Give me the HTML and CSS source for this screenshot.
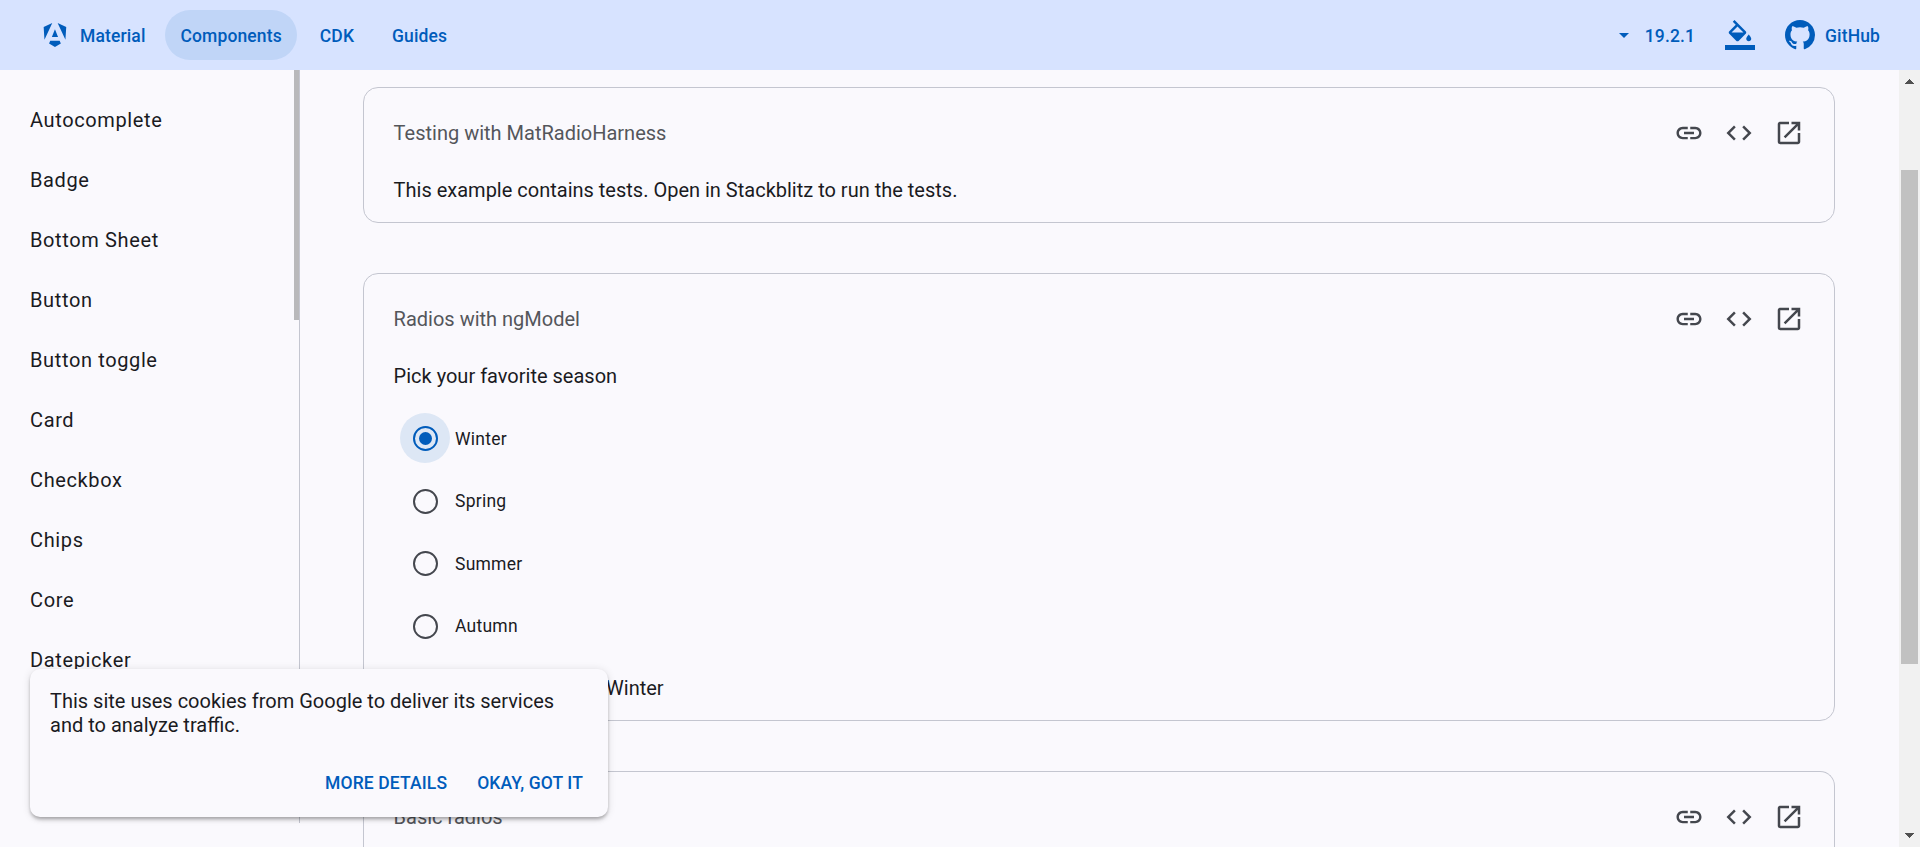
FILE: index.html
```
<!DOCTYPE html>
<html lang="en">
<head>
<meta charset="utf-8">
<title>Radio button | Angular Material</title>
<link rel="stylesheet" href="styles.css">
</head>
<body>
<svg class="sprite" width="0" height="0">
  <symbol id="link" viewBox="0 0 24 24"><path d="M3.9 12c0-1.71 1.39-3.1 3.1-3.1h4V7H7c-2.76 0-5 2.24-5 5s2.24 5 5 5h4v-1.9H7c-1.71 0-3.1-1.39-3.1-3.1zM8 13h8v-2H8v2zm9-6h-4v1.9h4c1.71 0 3.1 1.39 3.1 3.1s-1.39 3.1-3.1 3.1h-4V17h4c2.76 0 5-2.24 5-5s-2.24-5-5-5z"/></symbol>
  <symbol id="code" viewBox="0 0 24 24"><path d="M9.4 16.6L4.8 12l4.6-4.6L8 6l-6 6 6 6 1.4-1.4zm5.2 0l4.6-4.6-4.6-4.6L16 6l6 6-6 6-1.4-1.4z"/></symbol>
  <symbol id="open" viewBox="0 0 24 24"><path d="M19 19H5V5h7V3H5c-1.11 0-2 .9-2 2v14c0 1.1.89 2 2 2h14c1.1 0 2-.9 2-2v-7h-2v7zM14 3v2h3.59l-9.83 9.83 1.41 1.41L19 6.41V10h2V3h-7z"/></symbol>
</svg>
<header class="navbar">
  <a class="nav-link home">
    <svg class="logo" viewBox="0 0 223 236"><path d="m222.077 39.192-8.019 125.923L137.387 0l84.69 39.192Zm-53.105 162.825-57.933 33.056-57.934-33.056 11.783-28.556h92.301l11.783 28.556ZM111.039 62.675l30.357 73.803H80.681l30.358-73.803ZM7.937 165.115 0 39.192 84.69 0 7.937 165.115Z"/></svg>
    <span>Material</span>
  </a>
  <a class="nav-link active"><span>Components</span></a>
  <a class="nav-link"><span>CDK</span></a>
  <a class="nav-link"><span>Guides</span></a>
  <div class="nav-end">
    <a class="version"><svg class="arrow" viewBox="0 0 10 5"><path d="M0 0h10L5 5z"/></svg><span>19.2.1</span></a>
    <svg class="bucket" viewBox="0 0 24 24"><path d="M16.56 8.94L7.62 0 6.21 1.41l2.38 2.38-5.15 5.15c-.59.59-.59 1.54 0 2.12l5.5 5.5c.29.29.68.44 1.06.44s.77-.15 1.06-.44l5.5-5.5c.59-.58.59-1.53 0-2.12zM5.21 10L10 5.21 14.79 10H5.21zM19 11.5s-2 2.17-2 3.5c0 1.1.9 2 2 2s2-.9 2-2c0-1.33-2-3.5-2-3.5zM0 20h24v4H0z"/></svg>
    <a class="github"><svg viewBox="0 0 16 16"><path d="M8 0C3.58 0 0 3.58 0 8c0 3.54 2.29 6.53 5.47 7.59.4.07.55-.17.55-.38 0-.19-.01-.82-.01-1.49-2.01.37-2.53-.49-2.69-.94-.09-.23-.48-.94-.82-1.13-.28-.15-.68-.52-.01-.53.63-.01 1.08.58 1.23.82.72 1.21 1.87.87 2.33.66.07-.52.28-.87.51-1.07-1.78-.2-3.64-.89-3.64-3.95 0-.87.31-1.59.82-2.15-.08-.2-.36-1.02.08-2.12 0 0 .67-.21 2.2.82.64-.18 1.32-.27 2-.27s1.36.09 2 .27c1.53-1.04 2.2-.82 2.2-.82.44 1.1.16 1.92.08 2.12.51.56.82 1.27.82 2.15 0 3.07-1.87 3.75-3.65 3.95.29.25.54.73.54 1.48 0 1.07-.01 1.93-.01 2.2 0 .21.15.46.55.38A8.01 8.01 0 0 0 16 8c0-4.42-3.58-8-8-8z"/></svg><span>GitHub</span></a>
  </div>
</header>
<div class="body">
  <nav class="sidebar">
    <div class="items">
      <a>Autocomplete</a><a>Badge</a><a>Bottom Sheet</a><a>Button</a><a>Button toggle</a><a>Card</a><a>Checkbox</a><a>Chips</a><a>Core</a><a>Datepicker</a>
    </div>
    <div class="side-thumb"></div>
  </nav>
  <main class="content">
    <section class="card">
      <div class="card-head"><span>Testing with MatRadioHarness</span><div class="actions"><svg><use href="#link"/></svg><svg><use href="#code"/></svg><svg><use href="#open"/></svg></div></div>
      <p class="text">This example contains tests. Open in Stackblitz to run the tests.</p>
    </section>
    <section class="card tall">
      <div class="card-head"><span>Radios with ngModel</span><div class="actions"><svg><use href="#link"/></svg><svg><use href="#code"/></svg><svg><use href="#open"/></svg></div></div>
      <p class="text">Pick your favorite season</p>
      <div class="radios">
        <label class="radio checked"><span class="ripple"><span class="ring"></span></span>Winter</label>
        <label class="radio"><span class="ripple"><span class="ring"></span></span>Spring</label>
        <label class="radio"><span class="ripple"><span class="ring"></span></span>Summer</label>
        <label class="radio"><span class="ripple"><span class="ring"></span></span>Autumn</label>
      </div>
      <p class="text result">Your favorite season is: Winter</p>
    </section>
    <section class="card last">
      <div class="card-head"><span>Basic radios</span><div class="actions"><svg><use href="#link"/></svg><svg><use href="#code"/></svg><svg><use href="#open"/></svg></div></div>
    </section>
  </main>
  <div class="scrollbar">
    <svg viewBox="0 0 9 5"><path d="M4 0h1v1h1v1h1v1h1v1h1v1H0V4h1V3h1V2h1V1h1z"/></svg>
    <div class="thumb"></div>
    <svg viewBox="0 0 9 5"><path d="M0 0h9v1H8v1H7v1H6v1H5v1H4V4H3V3H2V2H1V1H0z"/></svg>
  </div>
</div>
<aside class="cookies">
  <p>This site uses cookies from Google to deliver its services and to analyze traffic.</p>
  <div class="cookie-actions"><a>MORE DETAILS</a><a>OKAY, GOT IT</a></div>
</aside>
</body>
</html>
```
FILE: styles.css
```
* { box-sizing: border-box; }
body {
  margin: 0;
  height: 847px;
  overflow: hidden;
  display: flex;
  flex-direction: column;
  background: #faf9fd;
  color: #1a1b1f;
  font: 400 20px/30px Roboto, sans-serif;
}
.sprite { display: none; }
p { margin: 0; }
svg { fill: currentColor; flex: none; display: block; }

.navbar {
  flex: none;
  height: 70px;
  padding: 10px 20px;
  display: flex;
  background: #d7e3ff;
  color: #005cbb;
  font-size: 17.5px;
  font-weight: 500;
  letter-spacing: 0.125px;
}
.navbar span { padding-top: 1px; }
.nav-link {
  height: 50px;
  padding: 0 15px;
  margin-right: 8px;
  border-radius: 25px;
  display: flex;
  align-items: center;
}
.nav-link.home { padding: 0 15px 0 22px; margin-right: 5px; }
.nav-link.active { background: #c0d5f7; }
.logo { width: 26px; height: 24px; margin-right: 12px; }
.nav-end { margin-left: auto; display: flex; align-items: center; }
.version { display: flex; align-items: center; margin-right: 30px; }
.arrow { width: 10px; height: 5px; margin-right: 16px; }
.bucket { width: 30px; height: 30px; margin-right: 30px; }
.github { display: flex; align-items: center; margin-right: 20px; }
.github svg { width: 30px; height: 30px; margin-right: 10px; }

.body { flex: 1; min-height: 0; display: flex; }
.sidebar {
  width: 300px;
  height: 753px;
  display: flex;
  justify-content: space-between;
  border-right: 1px solid #c4c6d0;
  letter-spacing: 0.625px;
}
.items { padding: 20px 30px; }
.items a { display: flex; align-items: center; height: 60px; }
.side-thumb { width: 5px; height: 250px; background: #b9b9bb; }

.content {
  flex: 1;
  padding: 17px 64px 0 63px;
  display: flex;
  flex-direction: column;
  gap: 50px;
  overflow: hidden;
}
.card {
  flex: none;
  height: 136px;
  padding: 20px 30px 0 29.6px;
  border: 1px solid #c4c6d0;
  border-radius: 15px;
}
.card.tall { height: 448px; }
.card.last { height: 76px; border-bottom: 0; border-radius: 15px 15px 0 0; }
.card-head {
  display: flex;
  height: 50px;
  align-items: center;
  justify-content: space-between;
  color: #54565b;
}
.actions { display: flex; gap: 20px; color: #44474e; }
.actions svg { width: 30px; height: 30px; }
.text { margin-top: 17px; }
.radios { margin: 22.5px 0 0 6.4px; }
.text.result { margin-top: 22px; }
.radio {
  height: 50px;
  margin-bottom: 12.5px;
  display: flex;
  align-items: center;
  font-size: 17.5px;
  letter-spacing: 0.25px;
}
.ripple {
  width: 50px;
  height: 50px;
  margin-right: 5px;
  border-radius: 50%;
  display: flex;
  align-items: center;
  justify-content: center;
}
.ring {
  width: 25px;
  height: 25px;
  margin-left: 1px;
  border: 2px solid #44474e;
  border-radius: 50%;
  display: flex;
  align-items: center;
  justify-content: center;
}
.checked .ripple { background: #dde7f5; margin-top: -1px; }
.checked .ring { border-color: #005cbb; margin-top: 1px; }
.checked .ring::after {
  content: "";
  width: 13px;
  height: 13px;
  border-radius: 50%;
  background: #005cbb;
}

.scrollbar {
  width: 21px;
  background: #f1f1f1;
  color: #505050;
  display: flex;
  flex-direction: column;
  align-items: center;
}
.scrollbar svg { width: 9px; height: 5px; margin: 9px 0; }
.scrollbar .thumb { width: 17px; height: 494px; margin: 77px 0 auto; background: #c1c1c1; }

.cookies {
  position: absolute;
  left: 30px;
  top: 669px;
  width: 578px;
  height: 148px;
  padding: 20px;
  border-radius: 10px;
  background: #faf9fd;
  box-shadow: 0 4px 5px -2px rgba(0,0,0,.2), 0 2px 3px rgba(0,0,0,.14), 0 1px 9px rgba(0,0,0,.12);
  line-height: 24px;
}
.cookie-actions {
  margin-top: 34px;
  padding-right: 5px;
  display: flex;
  justify-content: flex-end;
  gap: 30px;
  color: #005cbb;
  font-size: 17.5px;
  font-weight: 500;
  letter-spacing: 0.125px;
}
```
